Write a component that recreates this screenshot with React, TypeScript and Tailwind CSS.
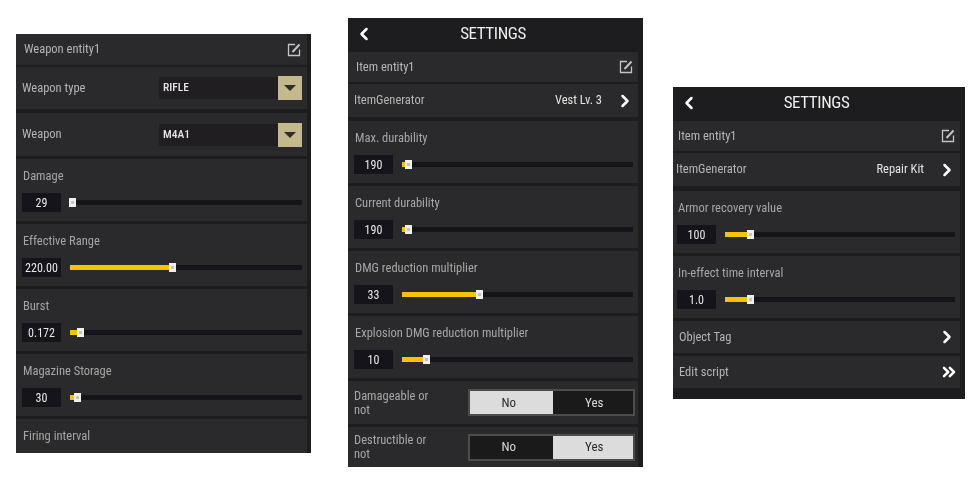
import { ChevronLeft, ChevronRight, ChevronsRight } from "lucide-react";

const font = "font-['Roboto',sans-serif] [font-stretch:75%]";

function EditIcon() {
  return (
    <svg width="14" height="14" viewBox="0 0 14 14" fill="none" className="text-[#c4c4c4]">
      <path d="M8 1.5H1.5v11h11V6.5" stroke="currentColor" strokeWidth="1.3" />
      <path d="M5.5 9 L12.5 1.5" stroke="currentColor" strokeWidth="2" />
    </svg>
  );
}

function EntityRow({ name, pad = "pl-2" }: { name: string; pad?: string }) {
  return (
    <div className={`flex h-[30px] items-center justify-between bg-[#2a2a2c] pr-[5px] text-[12.5px] text-[#b4b4b4] ${pad}`}>
      <span>{name}</span>
      <EditIcon />
    </div>
  );
}

function Header() {
  return (
    <div className="relative flex h-[34px] items-center justify-center pb-[2px] text-[17px] tracking-[-0.4px] text-[#eeeeee]">
      <ChevronLeft size={20} strokeWidth={3} className="absolute left-[6px] text-white" />
      <span>SETTINGS</span>
    </div>
  );
}

function SelectRow({ label, value, m, h }: { label: string; value: string; m: string; h: string }) {
  return (
    <div className={`flex items-center bg-[#2a2a2c] pl-[6px] pr-[5px] text-[12.5px] text-[#b4b4b4] ${m} ${h}`}>
      <span className="w-[137px]">{label}</span>
      <div className="flex h-[22px] flex-1 items-center justify-between bg-[#201e20] pl-1 text-[11.5px] font-medium text-[#e4e4e4]">
        <span>{value}</span>
        <div className="flex h-[24px] w-[24px] items-center justify-center bg-[#c4b98c]">
          <div className="h-0 w-0 border-x-[6px] border-t-[6px] border-x-transparent border-t-[#2f2d28]" />
        </div>
      </div>
    </div>
  );
}

function LinkRow({ label, value, pad = "pl-[6px]" }: { label: string; value: string; pad?: string }) {
  return (
    <div className={`mt-[2px] flex h-[33px] items-center justify-between bg-[#2a2a2c] pr-[3px] text-[12.5px] text-[#b4b4b4] ${pad}`}>
      <span>{label}</span>
      <div className="flex items-center gap-[13px]">
        <span className="text-[#e4e4e4]">{value}</span>
        <ChevronRight size={20} strokeWidth={3} className="text-white" />
      </div>
    </div>
  );
}

function SliderRow({ label, value, fill, pad = "pl-[6px]" }: { label: string; value: string; fill: number; pad?: string }) {
  return (
    <div className={`mt-[3px] flex h-[62px] flex-col bg-[#2a2a2c] pr-[5px] pt-[9px] ${pad}`}>
      <span className="h-[16px] pl-px text-[12.5px] leading-[16px] text-[#a6a6a6]">{label}</span>
      <div className="mt-[9px] flex items-center gap-[9px]">
        <div className="flex h-[19px] w-[39px] items-center justify-center bg-[#14141a] text-[12px] text-[#e8e8e8]">{value}</div>
        <div className="relative h-[5px] flex-1 bg-[#14141a]">
          <div className="h-full bg-[#f5c400]" style={{ width: fill }} />
          <div
            className="absolute top-[-2px] flex h-[9px] w-[7px] items-center justify-center bg-[#f0f0f0]"
            style={{ left: fill - 3 }}
          >
            <div className="h-[3px] w-[3px] bg-[#c4c4c4]" />
          </div>
        </div>
      </div>
    </div>
  );
}

function ToggleRow({ label, yes, h }: { label: string; yes: boolean; h: string }) {
  const on = "bg-[#dcdcdc] text-[#2a2a2c]";
  const off = "bg-[#1a1a1a] text-[#d8d8d8]";
  return (
    <div className={`mt-[3px] flex items-center justify-between bg-[#2a2a2c] pl-[6px] pr-[3px] text-[12.5px] text-[#a6a6a6] ${h}`}>
      <span className="w-[76px] leading-[14px]">{label}</span>
      <div className="flex h-[27px] w-[167px] border-2 border-[#4c4c4e] text-[13px]">
        <div className={`flex flex-1 items-center justify-center pr-[5px] ${yes ? off : on}`}>No</div>
        <div className={`flex flex-1 items-center justify-center pl-[3px] ${yes ? on : off}`}>Yes</div>
      </div>
    </div>
  );
}

function LeftPanel() {
  return (
    <div className="mt-[34px] h-[419px] w-[295px] shrink-0 overflow-hidden bg-[#1d1d1f] pr-1">
      <div className="flex h-[31px] items-center justify-between bg-[#2a2a2c] pl-2 pr-[6px] text-[12.5px] text-[#b4b4b4]">
        <span>Weapon entity1</span>
        <EditIcon />
      </div>
      <SelectRow label="Weapon type" value="RIFLE" m="mt-[2px]" h="h-[42px]" />
      <SelectRow label="Weapon" value="M4A1" m="mt-[4px]" h="h-[43px]" />
      <SliderRow label="Damage" value="29" fill={2} />
      <SliderRow label="Effective Range" value="220.00" fill={102} />
      <SliderRow label="Burst" value="0.172" fill={10} />
      <SliderRow label="Magazine Storage" value="30" fill={7} />
      <SliderRow label="Firing interval" value="" fill={0} />
    </div>
  );
}

function MiddlePanel() {
  return (
    <div className="ml-[37px] mt-[18px] h-[449px] w-[295px] shrink-0 overflow-hidden bg-[#1d1d1f] pr-[5px]">
      <Header />
      <EntityRow name="Item entity1" />
      <LinkRow label="ItemGenerator" value="Vest Lv. 3" />
      <div className="pt-px" />
      <SliderRow label="Max. durability" value="190" fill={6} />
      <SliderRow label="Current durability" value="190" fill={6} />
      <SliderRow label="DMG reduction multiplier" value="33" fill={77} />
      <SliderRow label="Explosion DMG reduction multiplier" value="10" fill={24} />
      <ToggleRow label="Damageable or not" yes={false} h="h-[43px]" />
      <ToggleRow label="Destructible or not" yes={true} h="h-[40px]" />
    </div>
  );
}

function RightPanel() {
  return (
    <div className="ml-[30px] mt-[87px] h-[312px] w-[292px] shrink-0 bg-[#1d1d1f] pr-[5px]">
      <Header />
      <EntityRow name="Item entity1" pad="pl-[5px]" />
      <LinkRow label="ItemGenerator" value="Repair Kit" pad="pl-[3px]" />
      <div className="pt-[2px]" />
      <SliderRow label="Armor recovery value" value="100" fill={25} pad="pl-[4px]" />
      <SliderRow label="In-effect time interval" value="1.0" fill={25} pad="pl-[4px]" />
      <div className="mt-[3px] flex h-[32px] items-center justify-between bg-[#2a2a2c] pl-[6px] pr-[3px] text-[12.5px] text-[#b4b4b4]">
        <span>Object Tag</span>
        <ChevronRight size={20} strokeWidth={3} className="text-white" />
      </div>
      <div className="mt-[3px] flex h-[32px] items-center justify-between bg-[#2a2a2c] pl-[6px] pr-[1px] text-[12.5px] text-[#b4b4b4]">
        <span>Edit script</span>
        <ChevronsRight size={20} strokeWidth={3} className="text-white" />
      </div>
    </div>
  );
}

export default function App() {
  return (
    <div className={`flex h-[481px] w-[973px] items-start overflow-hidden bg-white pl-4 blur-[0.4px] ${font}`}>
      <LeftPanel />
      <MiddlePanel />
      <RightPanel />
    </div>
  );
}
